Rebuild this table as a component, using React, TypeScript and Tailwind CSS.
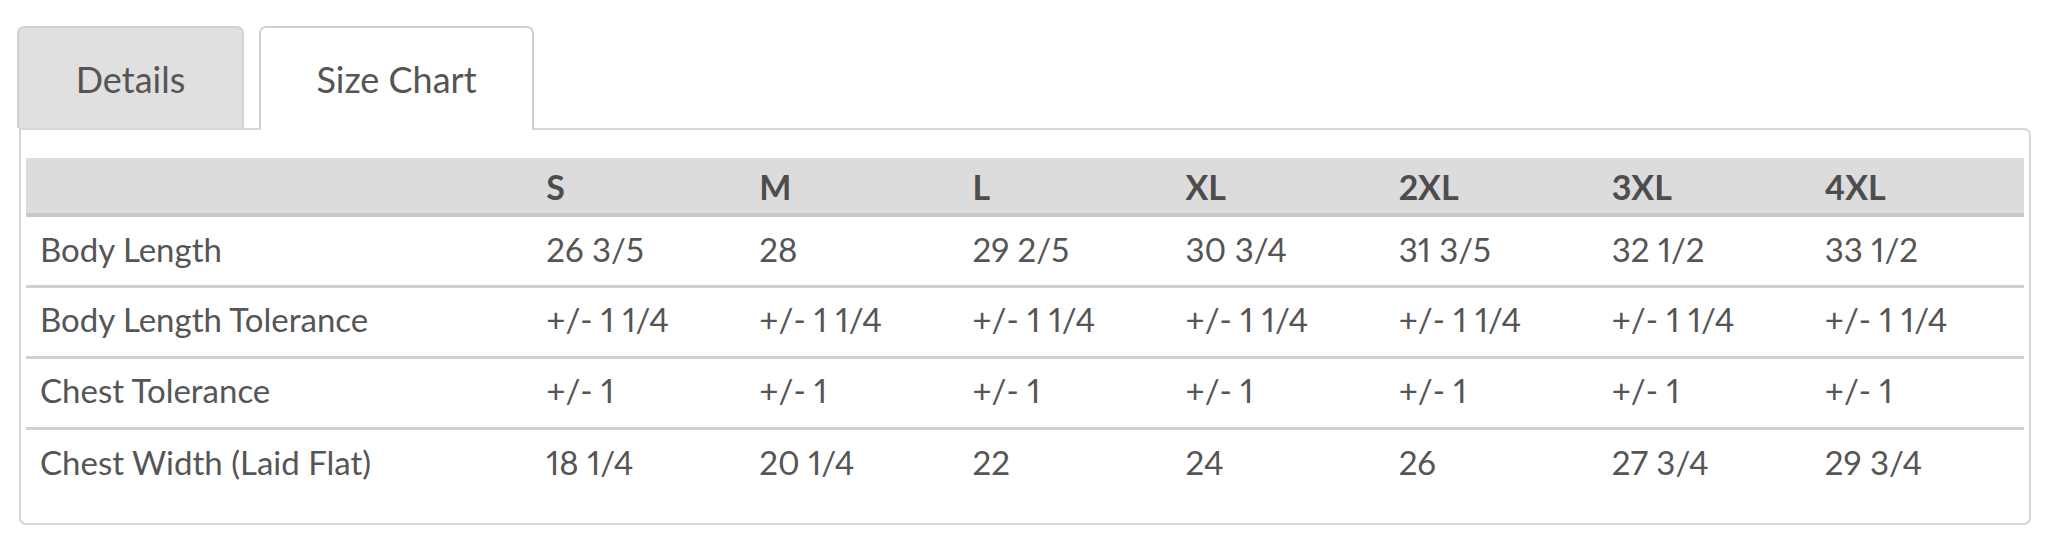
import React from "react";

const sizes = ["S", "M", "L", "XL", "2XL", "3XL", "4XL"];
const rows: { label: string; values: string[] }[] = [
  { label: "Body Length", values: ["26 3/5", "28", "29 2/5", "30 3/4", "31 3/5", "32 1/2", "33 1/2"] },
  { label: "Body Length Tolerance", values: Array(7).fill("+/- 1 1/4") },
  { label: "Chest Tolerance", values: Array(7).fill("+/- 1") },
  { label: "Chest Width (Laid Flat)", values: ["18 1/4", "20 1/4", "22", "24", "26", "27 3/4", "29 3/4"] },
];

export default function App() {
  return (
    <div
      className="w-full h-[539px] bg-white pt-[26px] pl-[17px] pr-[17px] text-[#555555]"
      style={{ fontFamily: "Lato, 'Open Sans', sans-serif" }}
    >
      <div className="flex items-end">
        <div className="w-[227px] h-[102px] bg-[#e0e0e0] border-2 border-b-0 border-[#d2d2d2] rounded-t-[7px] flex items-center justify-center pt-[2px] text-[36px] text-[#555555]">
          Details
        </div>
        <div className="relative z-10 ml-[15px] w-[275px] h-[104px] -mb-[2px] bg-white border-2 border-b-0 border-[#d2d2d2] rounded-t-[7px] flex items-center justify-center text-[36px] text-[#555555]">
          Size Chart
        </div>
      </div>
      <div className="ml-[2px] h-[397px] border-2 border-[#d6d6d6] rounded-b-[7px] rounded-tr-[7px] pt-[28px] px-[5px]">
        <table className="w-full table-fixed border-collapse">
          <colgroup>
            <col className="w-[506px]" />
            {sizes.map((s) => (
              <col key={s} className="w-[213px]" />
            ))}
          </colgroup>
          <thead>
            <tr className="bg-[#dcdcdc] h-[57px] border-b-[4px] border-[#c9c9c9]">
              <th className="px-[14px]"></th>
              {sizes.map((s) => (
                <th key={s} className="px-[14px] pt-[1px] text-left font-bold text-[34px] text-[#4d4d4d] proportional-nums">
                  {s}
                </th>
              ))}
            </tr>
          </thead>
          <tbody>
            {rows.map((r, i) => (
              <tr
                key={r.label}
                className={i < rows.length - 1 ? "h-[71px] border-b-[3px] border-[#d0d0d0]" : "h-[71px]"}
              >
                <td className="px-[14px] pb-[3px] text-[33px] whitespace-nowrap">{r.label}</td>
                {r.values.map((v, j) => (
                  <td key={j} className="px-[14px] pb-[3px] text-[33px] whitespace-nowrap proportional-nums">
                    {v}
                  </td>
                ))}
              </tr>
            ))}
          </tbody>
        </table>
      </div>
    </div>
  );
}
